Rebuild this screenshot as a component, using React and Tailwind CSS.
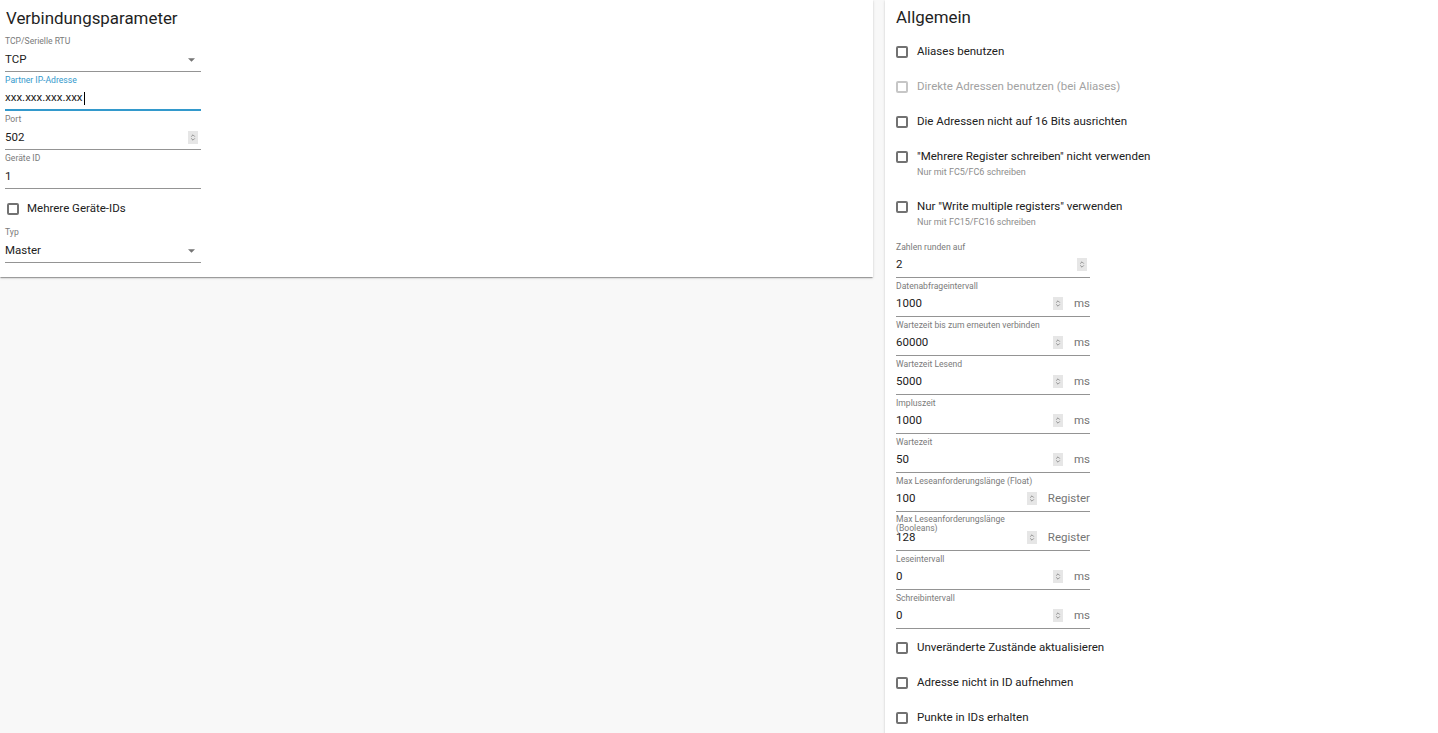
import React from "react";

const PAPER_SHADOW =
  "shadow-[0px_2px_1px_-1px_rgba(0,0,0,0.2),0px_1px_1px_0px_rgba(0,0,0,0.14),0px_1px_3px_0px_rgba(0,0,0,0.12)]";

const Spinner = () => (
  <span className="w-[10px] h-[13px] bg-[#e6e6e6] flex items-center justify-center shrink-0">
    <svg width="6" height="9" viewBox="0 0 6 9">
      <path d="M1.2 3.6L3 1.8L4.8 3.6M1.2 5.4L3 7.2L4.8 5.4" stroke="#7c7c7c" strokeWidth="0.8" fill="none" />
    </svg>
  </span>
);

const DropArrow = () => (
  <svg width="7" height="4" viewBox="0 0 7 4" className="shrink-0">
    <path d="M0 0.2H7L3.5 3.8Z" fill="#757575" />
  </svg>
);

const Checkbox = ({ disabled }) => (
  <span
    className={`w-[12px] h-[12px] rounded-[2px] border-2 shrink-0 ${
      disabled ? "border-[#c6c6c6]" : "border-[#727272]"
    }`}
  />
);

const CheckRow = ({ label, help, disabled, left }) => {
  if (help) {
    return (
      <div className="h-[50px] pt-[11px]">
        <div className="h-[13px] flex items-center gap-[9px]">
          <Checkbox />
          <span className="text-[11.5px] text-[#212121] leading-[13px]">{label}</span>
        </div>
        <div className="pl-[21px] mt-[4px] text-[9px] leading-[10px] text-[#8c8c8c]">{help}</div>
      </div>
    );
  }
  return (
    <div className={`h-[35px] flex items-center ${left ? "gap-[8px] pl-[2px]" : "gap-[9px]"}`}>
      <Checkbox disabled={disabled} />
      <span className={`text-[11.5px] ${disabled ? "text-[#a2a2a2]" : "text-[#212121]"}`}>{label}</span>
    </div>
  );
};

const Field = ({ label, value, select, focused, spinner, unit, twoLine }) => (
  <div className="mb-[2px]">
    <div
      className={`h-[12px] text-[8.6px] ${twoLine ? "leading-[9px] pt-[1.5px]" : "leading-[12px] whitespace-nowrap"} ${
        focused ? "text-[#3399cc]" : "text-[#7a7a7a]"
      }`}
    >
      {label}
    </div>
    <div
      className={`h-[25px] flex items-center ${
        focused ? "border-b-2 border-[#3399cc]" : "border-b border-[#949494]"
      }`}
    >
      <div className="flex-1 flex items-center pr-[3px]">
        <span className="flex-1 text-[11.5px] text-[#212121] flex items-center pt-[1px]">
          {value}
          {focused && <span className="w-px h-[13px] bg-black ml-[1px]" />}
        </span>
        {select && <span className="pr-[3px] pt-[2px]"><DropArrow /></span>}
        {spinner && <Spinner />}
      </div>
      {unit && <span className="ml-[8px] text-[11.5px] text-[#757575]">{unit}</span>}
    </div>
  </div>
);

const GENERAL_TOP = [
  { label: "Aliases benutzen" },
  { label: "Direkte Adressen benutzen (bei Aliases)", disabled: true },
  { label: "Die Adressen nicht auf 16 Bits ausrichten" },
  { label: "\"Mehrere Register schreiben\" nicht verwenden", help: "Nur mit FC5/FC6 schreiben" },
  { label: "Nur \"Write multiple registers\" verwenden", help: "Nur mit FC15/FC16 schreiben" },
];

const GENERAL_FIELDS = [
  { label: "Zahlen runden auf", value: "2" },
  { label: "Datenabfrageintervall", value: "1000", unit: "ms" },
  { label: "Wartezeit bis zum erneuten verbinden", value: "60000", unit: "ms" },
  { label: "Wartezeit Lesend", value: "5000", unit: "ms" },
  { label: "Impluszeit", value: "1000", unit: "ms" },
  { label: "Wartezeit", value: "50", unit: "ms" },
  { label: "Max Leseanforderungslänge (Float)", value: "100", unit: "Register" },
  {
    label: (
      <>
        Max Leseanforderungslänge
        <br />
        (Booleans)
      </>
    ),
    value: "128",
    unit: "Register",
    twoLine: true,
  },
  { label: "Leseintervall", value: "0", unit: "ms" },
  { label: "Schreibintervall", value: "0", unit: "ms" },
];

const GENERAL_BOTTOM = [
  "Unveränderte Zustände aktualisieren",
  "Adresse nicht in ID aufnehmen",
  "Punkte in IDs erhalten",
];

export default function App() {
  return (
    <div className="min-h-screen bg-[#f8f8f8] flex items-start gap-[12px] font-[Roboto,sans-serif]">
      {/* Connection */}
      <div className={`w-[873px] shrink-0 bg-white pb-[12px] ${PAPER_SHADOW}`}>
        <div className="h-[35px] leading-[36px] pl-[6px] text-[16.9px] text-[#1f1f1f]">Verbindungsparameter</div>
        <div className="w-[201px] pl-[5px]">
          <Field label="TCP/Serielle RTU" value="TCP" select />
          <Field label="Partner IP-Adresse" value="xxx.xxx.xxx.xxx" focused />
          <Field label="Port" value="502" spinner />
          <Field label="Geräte ID" value="1" />
          <CheckRow label="Mehrere Geräte-IDs" left />
          <Field label="Typ" value="Master" select />
        </div>
      </div>

      {/* General */}
      <div className={`flex-1 self-stretch bg-white pl-[11px] ${PAPER_SHADOW}`}>
        <div className="h-[34px] leading-[34px] text-[16.9px] text-[#1f1f1f]">Allgemein</div>
        {GENERAL_TOP.map((c, i) => (
          <CheckRow key={i} {...c} />
        ))}
        <div className="w-[194px] mt-[1.5px]">
          {GENERAL_FIELDS.map((f, i) => (
            <Field key={i} {...f} spinner />
          ))}
        </div>
        {GENERAL_BOTTOM.map((l) => (
          <CheckRow key={l} label={l} />
        ))}
      </div>
    </div>
  );
}
